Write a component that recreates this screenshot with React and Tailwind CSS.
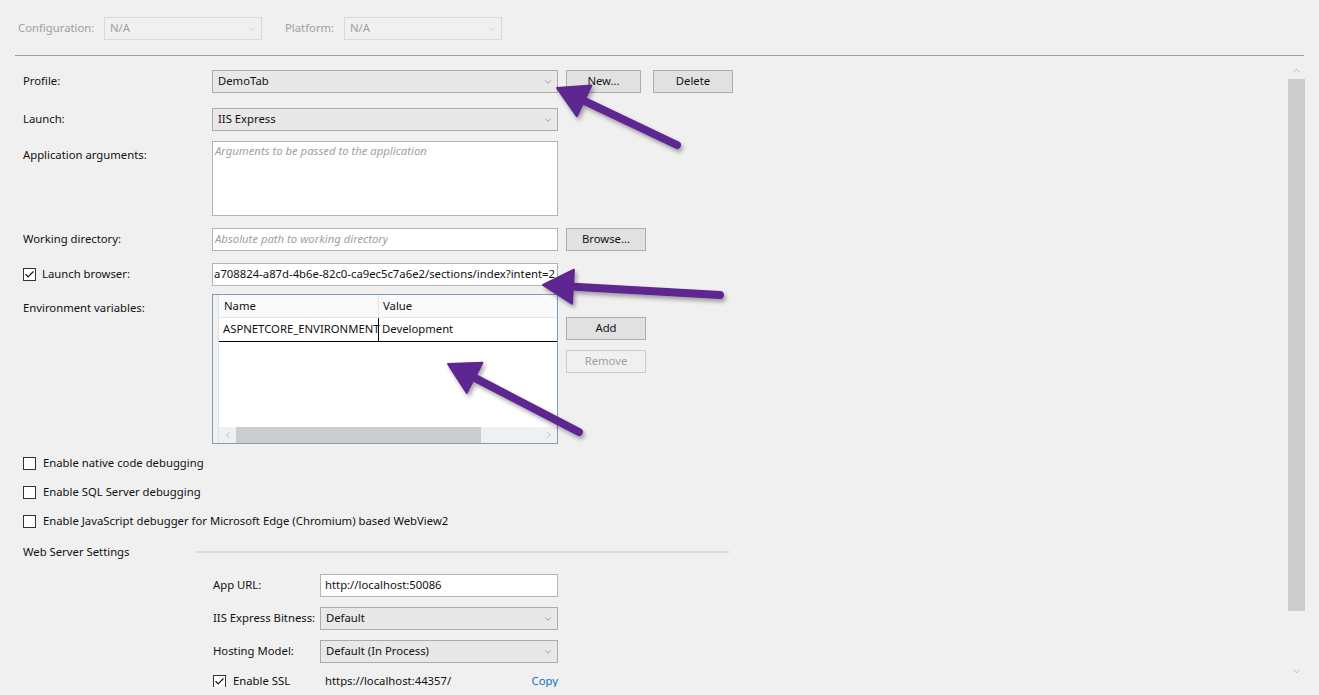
import { Check, ChevronDown, ChevronUp, ChevronLeft, ChevronRight } from "lucide-react";

const font = { fontFamily: '"Segoe UI", "Noto Sans", sans-serif' };

function Select({ value, className = "", disabled = false }) {
  return (
    <div
      className={`flex h-[23px] items-center justify-between border pl-[5px] pr-[4px] ${
        disabled
          ? "border-[#d9d9d9] bg-[#f0f0f0] text-[#a0a0a0]"
          : "border-[#acacac] bg-[#e8e8e8] text-[#111111]"
      } ${className}`}
    >
      <span className="truncate">{value}</span>
      <ChevronDown size={10} strokeWidth={1.5} className={disabled ? "text-[#c0c0c0]" : "text-[#707070]"} />
    </div>
  );
}

function Button({ children, className = "", disabled = false }) {
  return (
    <div
      className={`flex h-[23px] items-center justify-center border ${
        disabled
          ? "border-[#cccccc] bg-[#f0f0f0] text-[#a0a0a0]"
          : "border-[#adadad] bg-[#e1e1e1] text-[#111111]"
      } ${className}`}
    >
      {children}
    </div>
  );
}

function TextBox({ value, placeholder, className = "" }) {
  return (
    <div className={`flex h-[23px] items-center border border-[#b4b4b4] bg-white px-[2px] ${className}`}>
      {value ? (
        <span className="truncate text-[#111111]">{value}</span>
      ) : (
        <span className="truncate italic text-[#a0a0a0]">{placeholder}</span>
      )}
    </div>
  );
}

function CheckBox({ checked }) {
  return (
    <div className="flex h-[13px] w-[13px] shrink-0 items-center justify-center border border-[#333333] bg-white">
      {checked ? <Check size={11} strokeWidth={2.5} className="text-[#111111]" /> : null}
    </div>
  );
}

function Row({ label, mt, children, start = false }) {
  return (
    <div className={`flex ${start ? "items-start" : "items-center"}`} style={{ marginTop: mt }}>
      <div className={`w-[189px] shrink-0 whitespace-nowrap ${start ? "pt-[6px]" : ""}`}>{label}</div>
      {children}
    </div>
  );
}

function CheckRow({ label, mt }) {
  return (
    <div className="flex h-[16px] items-center gap-[7px]" style={{ marginTop: mt }}>
      <CheckBox />
      <span className="whitespace-nowrap">{label}</span>
    </div>
  );
}

function Arrows() {
  const arrows = [
    { tail: [677, 145], tip: [557, 88] },
    { tail: [720, 295], tip: [543, 285] },
    { tail: [579, 432], tip: [448, 364] },
  ];
  return (
    <svg className="pointer-events-none absolute left-0 top-0" width="1319" height="695" viewBox="0 0 1319 695">
      <defs>
        <filter id="sh" x="-20%" y="-20%" width="140%" height="140%">
          <feDropShadow dx="2" dy="3" stdDeviation="2" floodColor="#000" floodOpacity="0.35" />
        </filter>
      </defs>
      {arrows.map(({ tail, tip }, i) => {
        const dx = tip[0] - tail[0];
        const dy = tip[1] - tail[1];
        const len = Math.hypot(dx, dy);
        const ux = dx / len;
        const uy = dy / len;
        const nx = -uy;
        const ny = ux;
        const bx = tip[0] - 30 * ux;
        const by = tip[1] - 30 * uy;
        const sx = tip[0] - 22 * ux;
        const sy = tip[1] - 22 * uy;
        const pts = `${tip[0]},${tip[1]} ${bx + 17 * nx},${by + 17 * ny} ${bx - 17 * nx},${by - 17 * ny}`;
        return (
          <g key={i} filter="url(#sh)">
            <line x1={tail[0]} y1={tail[1]} x2={sx} y2={sy} stroke="#5d2590" strokeWidth="8" strokeLinecap="round" />
            <polygon points={pts} fill="#5d2590" stroke="#5d2590" strokeWidth="2" strokeLinejoin="round" />
          </g>
        );
      })}
    </svg>
  );
}

export default function App() {
  return (
    <div className="relative h-[695px] w-[1319px] overflow-hidden bg-[#f0f0f0] text-[11.3px] text-[#111111]" style={font}>
      {/* top config bar */}
      <div className="flex items-center pl-[18px] pt-[17px]">
        <span className="w-[86px] text-[#a0a0a0]">Configuration:</span>
        <Select value="N/A" disabled className="w-[158px]" />
        <span className="ml-[23px] w-[59px] text-[#a0a0a0]">Platform:</span>
        <Select value="N/A" disabled className="w-[158px]" />
      </div>
      <div className="ml-[15px] mt-[15px] h-px w-[1289px] bg-[#a0a0a0]" />

      <div className="flex h-[631px]">
        {/* scrolled content */}
        <div className="relative h-[631px] flex-1 overflow-hidden pl-[23px]">
          <Row label="Profile:" mt={14}>
            <Select value="DemoTab" className="w-[346px]" />
            <Button className="ml-[8px] w-[75px]">New...</Button>
            <Button className="ml-[12px] w-[80px]">Delete</Button>
          </Row>
          <Row label="Launch:" mt={15}>
            <Select value="IIS Express" className="w-[346px]" />
          </Row>
          <Row label="Application arguments:" mt={10} start>
            <div className="h-[75px] w-[346px] border border-[#b4b4b4] bg-white px-[2px] pt-[1px] italic text-[#a0a0a0]">
              Arguments to be passed to the application
            </div>
          </Row>
          <Row label="Working directory:" mt={12}>
            <TextBox placeholder="Absolute path to working directory" className="w-[346px]" />
            <Button className="ml-[8px] w-[80px]">Browse...</Button>
          </Row>
          <Row
            label={
              <div className="flex items-center gap-[6px]">
                <CheckBox checked />
                <span>Launch browser:</span>
              </div>
            }
            mt={12}
          >
            <div className="flex h-[23px] w-[346px] items-center justify-end overflow-hidden whitespace-nowrap border border-[#b4b4b4] bg-white pr-[2px]">
              <span>a708824-a87d-4b6e-82c0-ca9ec5c7a6e2/sections/index?intent=2</span>
            </div>
          </Row>
          <Row label="Environment variables:" mt={8} start>
            <div className="flex h-[150px] w-[346px] border border-[#7f9db9] bg-white">
              <div className="w-[6px] shrink-0 border-r border-[#e0e0e0] bg-[#f0f0f0]" />
              <div className="flex flex-1 flex-col">
                <div className="flex h-[23px] border-b border-[#e5e5e5] bg-[#fafafa]">
                  <div className="flex w-[160px] items-center border-r border-[#e5e5e5] pl-[5px]">Name</div>
                  <div className="flex flex-1 items-center pl-[4px]">Value</div>
                </div>
                <div className="flex h-[24px] border-b border-black">
                  <div className="flex w-[160px] items-center whitespace-nowrap border-r border-black pl-[4px]">ASPNETCORE_ENVIRONMENT</div>
                  <div className="flex flex-1 items-center pl-[3px]">Development</div>
                </div>
                <div className="flex-1" />
                <div className="flex h-[16px] items-center bg-[#f0f0f0]">
                  <div className="flex w-[17px] items-center justify-center text-[#a0a0a0]">
                    <ChevronLeft size={10} strokeWidth={1.5} />
                  </div>
                  <div className="h-full w-[245px] bg-[#cdcdcd]" />
                  <div className="flex-1" />
                  <div className="flex w-[17px] items-center justify-center text-[#a0a0a0]">
                    <ChevronRight size={10} strokeWidth={1.5} />
                  </div>
                </div>
              </div>
            </div>
            <div className="ml-[8px] flex flex-col pt-[23px]">
              <Button className="w-[80px]">Add</Button>
              <Button disabled className="mt-[10px] w-[80px]">Remove</Button>
            </div>
          </Row>

          <CheckRow label="Enable native code debugging" mt={11} />
          <CheckRow label="Enable SQL Server debugging" mt={13} />
          <CheckRow label="Enable JavaScript debugger for Microsoft Edge (Chromium) based WebView2" mt={13} />

          <div className="mt-[15px] flex h-[16px] items-center">
            <span className="w-[174px]">Web Server Settings</span>
            <div className="h-[2px] w-[532px] bg-[#d8d8d8]" />
          </div>

          <div className="ml-[190px]">
            <div className="mt-[14px] flex items-center">
              <span className="w-[107px] whitespace-nowrap">App URL:</span>
              <TextBox value="http://localhost:50086" className="w-[238px] px-[4px]" />
            </div>
            <div className="mt-[10px] flex items-center">
              <span className="w-[107px] whitespace-nowrap">IIS Express Bitness:</span>
              <Select value="Default" className="w-[238px]" />
            </div>
            <div className="mt-[10px] flex items-center">
              <span className="w-[107px] whitespace-nowrap">Hosting Model:</span>
              <Select value="Default (In Process)" className="w-[238px]" />
            </div>
            <div className="mt-[10px] flex h-[16px] w-[345px] items-center whitespace-nowrap">
              <CheckBox checked />
              <span className="ml-[7px] w-[92px]">Enable SSL</span>
              <span className="flex-1">https://localhost:44357/</span>
              <span className="text-[#0e70c0]">Copy</span>
            </div>
          </div>
        </div>

        {/* vertical scrollbar */}
        <div className="mr-[14px] mt-[6px] mb-[7px] flex w-[17px] flex-col items-center">
          <div className="flex h-[17px] items-center justify-center text-[#a0a0a0]">
            <ChevronUp size={11} strokeWidth={1.5} />
          </div>
          <div className="h-[532px] w-full bg-[#cdcdcd]" />
          <div className="flex-1" />
          <div className="flex h-[17px] items-center justify-center text-[#a0a0a0]">
            <ChevronDown size={11} strokeWidth={1.5} />
          </div>
        </div>
      </div>

      <Arrows />
    </div>
  );
}
